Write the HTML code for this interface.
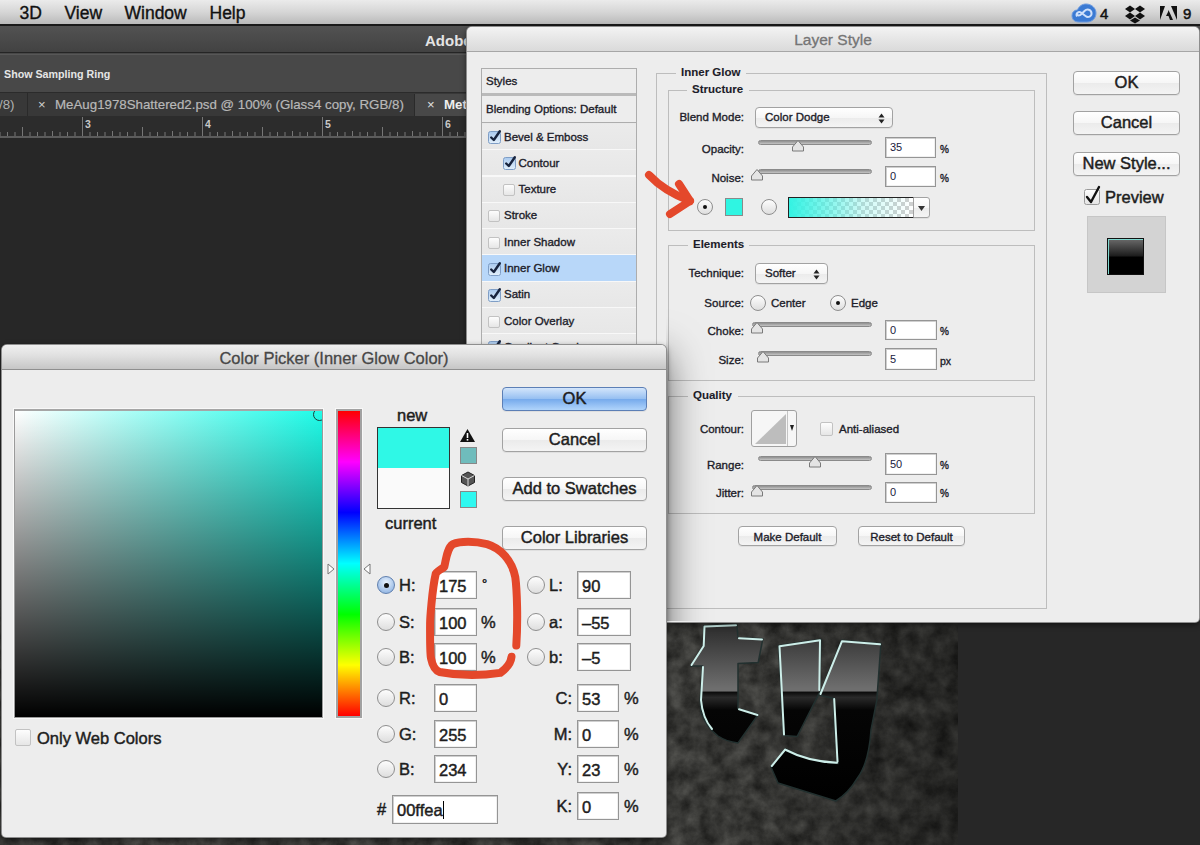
<!DOCTYPE html>
<html><head><meta charset="utf-8"><style>
*{margin:0;padding:0;box-sizing:border-box}
html,body{width:1200px;height:845px;overflow:hidden;background:#272727;font-family:"Liberation Sans",sans-serif;position:relative}
.a{position:absolute}
.t{position:absolute;white-space:nowrap;line-height:1}
.dlg{position:absolute;background:#ededed;border-radius:5px 5px 4px 4px;box-shadow:0 0 0 1px #8e8e8e, 0 2px 6px rgba(0,0,0,.6)}
.dtitle{position:absolute;left:0;top:0;right:0;height:25px;border-radius:5px 5px 0 0;background:linear-gradient(#f1f1f1,#e3e3e3 40%,#d2d2d2);border-bottom:1px solid #8f8f8f;text-align:center;color:#444;line-height:25px}
.lbl{position:absolute;white-space:nowrap;font-size:11.5px;color:#1d1d2a;line-height:1;-webkit-text-stroke:0.35px #1d1d2a}
.big{font-size:16.5px;-webkit-text-stroke:0.45px #1d1d1d;color:#1d1d1d}
.inp{position:absolute;background:#fff;border:1px solid #959595;box-shadow:inset 1px 1px 0 #cfcfcf,inset -1px -1px 0 #f0f0f0;font-size:11px;color:#1a1a40;padding-left:4px;white-space:nowrap}
.btn{position:absolute;border:1px solid #a2a2a2;border-radius:4px;background:linear-gradient(#ffffff,#f6f6f6 50%,#ebebeb 51%,#f4f4f4);text-align:center;color:#111;white-space:nowrap;box-shadow:0 1px 0 rgba(0,0,0,.06)}
.grp{position:absolute;border:1px solid #bdbdbd}
.chk{position:absolute;width:12px;height:12px;border:1px solid #c2c2c2;border-radius:2px;background:linear-gradient(#fdfdfd,#e6e6e6)}
.radio{position:absolute;border-radius:50%;border:1px solid #8e8e8e;background:linear-gradient(#fdfdfd,#e0e0e0)}
.track{position:absolute;height:5px;border-radius:3px;background:linear-gradient(#8f8f8f,#c4c4c4);border:1px solid #8a8a8a}
</style></head><body>
<div class="a" style="left:0;top:0;width:1200px;height:24px;background:linear-gradient(#ebebeb,#d6d6d6 50%,#bababa)"></div>
<div class="a" style="left:0;top:24px;width:1200px;height:2px;background:#1a1a1a"></div>
<div class="t" style="left:19.5px;top:5px;font-size:17.5px;color:#111;-webkit-text-stroke:0.35px #111">3D</div>
<div class="t" style="left:64.5px;top:5px;font-size:17.5px;color:#111;-webkit-text-stroke:0.35px #111">View</div>
<div class="t" style="left:124.5px;top:5px;font-size:17.5px;color:#111;-webkit-text-stroke:0.35px #111">Window</div>
<div class="t" style="left:209.5px;top:5px;font-size:17.5px;color:#111;-webkit-text-stroke:0.35px #111">Help</div>
<svg class="a" style="left:1068px;top:1px" width="132" height="23">
<g transform="translate(4,2)">
<path d="M7 19 C2 19 0 16 0 12.5 C0 9 2.5 7 5.5 7 C7 3 10.5 1 14 1 C19.5 1 24 5 24 10 C24 15.5 20 19 15 19 Z" fill="#3b7ad3" stroke="#6d9be0" stroke-width="1"/>
<path d="M5 13.5 C3.5 10.5 6.5 8 9 9.5 L13.5 13 C16 15 20 13.5 19.5 10 C19 6.5 15 5.5 12.5 8 L9.5 11 C7.5 13 5.5 13 5 11" fill="none" stroke="#cfe0fb" stroke-width="2"/>
</g>
<text x="32" y="18" font-size="15" font-family="Liberation Sans" fill="#111" stroke="#111" stroke-width="0.5">4</text>
<g transform="translate(57,4)" fill="#111">
<path d="M0 4 L5 0.5 L10 4 L5 7.5 Z"/><path d="M10 4 L15 0.5 L20 4 L15 7.5 Z"/>
<path d="M0 11 L5 7.5 L10 11 L5 14.5 Z"/><path d="M10 11 L15 7.5 L20 11 L15 14.5 Z"/>
<path d="M5 15.5 L10 12.5 L15 15.5 L10 18.5 Z"/>
</g>
<g transform="translate(92,5)" fill="#111">
<path d="M0 0 L5 0 L0 14 Z"/><path d="M11 0 L17 0 L17 14 Z"/><path d="M8.5 4 L13 14 L10 14 L8.5 10 L6 10 L8 6 Z"/>
</g>
<text x="115" y="18" font-size="15" font-family="Liberation Sans" fill="#111" stroke="#111" stroke-width="0.5">9</text>
</svg>
<div class="a" style="left:0;top:26px;width:1200px;height:26px;background:linear-gradient(#525252,#424242)"></div>
<div class="a" style="left:0;top:52px;width:1200px;height:1px;background:#252525"></div>
<div class="t" style="left:425px;top:33px;font-size:15px;font-weight:bold;color:#e4e4e4">Adobe</div>
<div class="a" style="left:0;top:53px;width:1200px;height:39px;background:#484848"></div>
<div class="a" style="left:0;top:92px;width:1200px;height:1px;background:#2b2b2b"></div>
<div class="a" style="left:0;top:54px;width:1200px;height:1px;background:#575757"></div>
<div class="t" style="left:4px;top:69px;font-size:10.7px;font-weight:bold;color:#e6e6e6">Show Sampling Ring</div>
<div class="a" style="left:0;top:93px;width:1200px;height:23px;background:#383838"></div>
<div class="a" style="left:27px;top:93px;width:1px;height:23px;background:#2a2a2a"></div>
<div class="a" style="left:414px;top:94px;width:800px;height:22px;background:#484848;border-left:1px solid #2a2a2a"></div>
<div class="t" style="left:-1px;top:98px;font-size:13.3px;color:#b0b0b0">/8)</div>
<div class="t" style="left:38px;top:98px;font-size:13px;color:#d0d0d0">×</div>
<div class="t" style="left:55px;top:98px;font-size:13.3px;color:#b8b8b8;-webkit-text-stroke:0.2px #b8b8b8">MeAug1978Shattered2.psd @ 100% (Glass4 copy, RGB/8)</div>
<div class="t" style="left:427px;top:98px;font-size:13px;color:#e0e0e0">×</div>
<div class="t" style="left:444px;top:98px;font-size:13.3px;font-weight:bold;color:#eee">Met</div>
<div class="a" style="left:0;top:116px;width:1200px;height:21px;background:#2c2c2c"></div>
<svg class="a" style="left:0;top:0" width="470" height="140"><rect x="0" y="136" width="470" height="2" fill="#5c5c5c"/><rect x="-0.5" y="132" width="1" height="4" fill="#767676"/><rect x="7.0" y="132" width="1" height="4" fill="#767676"/><rect x="14.5" y="132" width="1" height="4" fill="#767676"/><rect x="22.0" y="127" width="1" height="9" fill="#767676"/><rect x="29.5" y="132" width="1" height="4" fill="#767676"/><rect x="37.0" y="132" width="1" height="4" fill="#767676"/><rect x="44.5" y="132" width="1" height="4" fill="#767676"/><rect x="52.0" y="131" width="1" height="5" fill="#767676"/><rect x="59.5" y="132" width="1" height="4" fill="#767676"/><rect x="67.0" y="132" width="1" height="4" fill="#767676"/><rect x="74.5" y="132" width="1" height="4" fill="#767676"/><rect x="82.0" y="117" width="1" height="19" fill="#767676"/><rect x="89.5" y="132" width="1" height="4" fill="#767676"/><rect x="97.0" y="132" width="1" height="4" fill="#767676"/><rect x="104.5" y="132" width="1" height="4" fill="#767676"/><rect x="112.0" y="131" width="1" height="5" fill="#767676"/><rect x="119.5" y="132" width="1" height="4" fill="#767676"/><rect x="127.0" y="132" width="1" height="4" fill="#767676"/><rect x="134.5" y="132" width="1" height="4" fill="#767676"/><rect x="142.0" y="127" width="1" height="9" fill="#767676"/><rect x="149.5" y="132" width="1" height="4" fill="#767676"/><rect x="157.0" y="132" width="1" height="4" fill="#767676"/><rect x="164.5" y="132" width="1" height="4" fill="#767676"/><rect x="172.0" y="131" width="1" height="5" fill="#767676"/><rect x="179.5" y="132" width="1" height="4" fill="#767676"/><rect x="187.0" y="132" width="1" height="4" fill="#767676"/><rect x="194.5" y="132" width="1" height="4" fill="#767676"/><rect x="202.0" y="117" width="1" height="19" fill="#767676"/><rect x="209.5" y="132" width="1" height="4" fill="#767676"/><rect x="217.0" y="132" width="1" height="4" fill="#767676"/><rect x="224.5" y="132" width="1" height="4" fill="#767676"/><rect x="232.0" y="131" width="1" height="5" fill="#767676"/><rect x="239.5" y="132" width="1" height="4" fill="#767676"/><rect x="247.0" y="132" width="1" height="4" fill="#767676"/><rect x="254.5" y="132" width="1" height="4" fill="#767676"/><rect x="262.0" y="127" width="1" height="9" fill="#767676"/><rect x="269.5" y="132" width="1" height="4" fill="#767676"/><rect x="277.0" y="132" width="1" height="4" fill="#767676"/><rect x="284.5" y="132" width="1" height="4" fill="#767676"/><rect x="292.0" y="131" width="1" height="5" fill="#767676"/><rect x="299.5" y="132" width="1" height="4" fill="#767676"/><rect x="307.0" y="132" width="1" height="4" fill="#767676"/><rect x="314.5" y="132" width="1" height="4" fill="#767676"/><rect x="322.0" y="117" width="1" height="19" fill="#767676"/><rect x="329.5" y="132" width="1" height="4" fill="#767676"/><rect x="337.0" y="132" width="1" height="4" fill="#767676"/><rect x="344.5" y="132" width="1" height="4" fill="#767676"/><rect x="352.0" y="131" width="1" height="5" fill="#767676"/><rect x="359.5" y="132" width="1" height="4" fill="#767676"/><rect x="367.0" y="132" width="1" height="4" fill="#767676"/><rect x="374.5" y="132" width="1" height="4" fill="#767676"/><rect x="382.0" y="127" width="1" height="9" fill="#767676"/><rect x="389.5" y="132" width="1" height="4" fill="#767676"/><rect x="397.0" y="132" width="1" height="4" fill="#767676"/><rect x="404.5" y="132" width="1" height="4" fill="#767676"/><rect x="412.0" y="131" width="1" height="5" fill="#767676"/><rect x="419.5" y="132" width="1" height="4" fill="#767676"/><rect x="427.0" y="132" width="1" height="4" fill="#767676"/><rect x="434.5" y="132" width="1" height="4" fill="#767676"/><rect x="442.0" y="117" width="1" height="19" fill="#767676"/><rect x="449.5" y="132" width="1" height="4" fill="#767676"/><rect x="457.0" y="132" width="1" height="4" fill="#767676"/><rect x="464.5" y="132" width="1" height="4" fill="#767676"/><text x="85" y="128" font-size="10.5" font-weight="bold" fill="#c8c8c8" font-family="Liberation Sans">3</text><text x="205" y="128" font-size="10.5" font-weight="bold" fill="#c8c8c8" font-family="Liberation Sans">4</text><text x="325" y="128" font-size="10.5" font-weight="bold" fill="#c8c8c8" font-family="Liberation Sans">5</text><text x="445" y="128" font-size="10.5" font-weight="bold" fill="#c8c8c8" font-family="Liberation Sans">6</text></svg>
<svg class="a" style="left:0;top:600px" width="960" height="245">
<defs><filter id="stone" x="0" y="0" width="100%" height="100%" color-interpolation-filters="sRGB">
<feTurbulence type="fractalNoise" baseFrequency="0.06" numOctaves="6" seed="5" result="n"/>
<feColorMatrix in="n" type="matrix" values="0.28 0 0 0 0.075  0.28 0 0 0 0.075  0.27 0 0 0 0.07  0 0 0 0 1"/>
</filter></defs>
<rect x="0" y="0" width="958" height="245" fill="#4e4e49" filter="url(#stone)"/>
<defs><linearGradient id="shade" x1="0" y1="0" x2="1" y2="0"><stop offset="0.3" stop-color="#000" stop-opacity="0"/><stop offset="1" stop-color="#000" stop-opacity="0.35"/></linearGradient></defs>
<rect x="667" y="0" width="291" height="245" fill="url(#shade)" transform="translate(0,0)"/>
</svg>
<svg class="a" style="left:0;top:0" width="1200" height="845">
<defs>
<linearGradient id="lg" x1="0" y1="620" x2="0" y2="800" gradientUnits="userSpaceOnUse">
<stop offset="0" stop-color="#262626"/><stop offset="0.38" stop-color="#6e6e6e"/><stop offset="0.395" stop-color="#6e6e6e"/>
<stop offset="0.40" stop-color="#0a0a0a"/><stop offset="0.43" stop-color="#2a2a2a"/><stop offset="0.5" stop-color="#050505"/><stop offset="1" stop-color="#000"/>
</linearGradient>
</defs>
<g fill="url(#lg)" stroke="#22302f" stroke-width="1.5" stroke-linejoin="round">
<path d="M703.7,625.7 L736.9,624.5 L738,637.5 L762.9,638.7 L758.2,662.4 L738,663.5 L738,708.5 L758.2,714.5 L738,742.9 C730,742 724,740 718,736 C710,730 704,722 701,712 L700.2,700 L702.5,665.9 L690.7,665.9 L703.7,645.8 Z"/>
<polygon points="778.5,645.5 820.9,639.3 819.8,692.1 797.1,736.6 783.6,735.5"/>
<path d="M841.6,640.3 L880.9,643.5 L876.8,700.4 L871,730 C869.5,752 865,768 857.5,778 C851,789 844,796 835.8,801 L778,783 L770.8,766.8 L785.5,749 C800,757 820,762 838,763.6 L834.8,730 L833.3,698.3 L819.8,695.2 Z"/>
</g>
<g fill="none" stroke="#cdeee9" stroke-width="2" stroke-linecap="round" stroke-linejoin="round">
<path d="M691.5,665 L703.7,646 L704.5,626.5 L736,625.3"/>
<path d="M739,638.3 L762,639.5"/>
<path d="M703,667 L701,700 C702,712 706,722 712,729"/>
<path d="M739,709.3 L757.5,715"/>
<path d="M784,734.5 L779.5,646.3 L820,640.2 L819.3,690"/>
<path d="M820.5,694 L842,641.2 L880,644.3"/>
<path d="M834.2,699 L837.5,761.5"/>
<path d="M771.8,766 L785.2,749.5"/>
<path d="M786,750 C800,757.5 820,762 837,762.8"/>
</g>
</svg>
<div class="dlg" style="left:467px;top:27px;width:732px;height:595px"><div class="dtitle" style="font-size:15.5px;color:#757575;-webkit-text-stroke:0.3px #757575;background:linear-gradient(#f3f3f3,#e6e6e6 50%,#dadada);border-bottom-color:#a6a6a6">Layer Style</div></div>
<div class="a" style="left:481px;top:68px;width:156px;height:292px;background:#e9e9e9;border:1px solid #adadad"></div>
<div class="a" style="left:482px;top:69px;width:154px;height:24px;background:#ededed"></div>
<div class="a" style="left:482px;top:93px;width:154px;height:3px;background:#bababa"></div>
<div class="a" style="left:482px;top:96px;width:154px;height:27px;background:#ededed;border-bottom:1px solid #adadad"></div>
<div class="a" style="left:482px;top:124px;width:154px;height:236px;background:repeating-linear-gradient(#ebebeb 0,#e7e7e7 25px,#f8f8f8 25px,#f8f8f8 26.3px)"></div>
<div class="a" style="left:482px;top:255px;width:154px;height:26px;background:#b8d7f9"></div>
<div class="lbl" style="left:486px;top:75.5px">Styles</div>
<div class="lbl" style="left:486px;top:104px">Blending Options: Default</div>
<svg width="0" height="0" style="position:absolute"><defs><linearGradient id="cbg" x1="0" y1="0" x2="0" y2="1"><stop offset="0" stop-color="#a9c9ee"/><stop offset="1" stop-color="#e3f0fb"/></linearGradient></defs></svg>
<svg class="a" style="left:488.0px;top:128.0px" width="16" height="16" viewBox="0 0 16 16"><rect x="0.5" y="3.5" width="12" height="12" rx="2" fill="url(#cbg)" stroke="#7f9ec6"/><path d="M3.2 9.5 L5.8 12 L11.8 3.2" fill="none" stroke="#18243e" stroke-width="2.4" stroke-linecap="round" stroke-linejoin="round"/></svg>
<div class="lbl" style="left:504.0px;top:131.5px">Bevel &amp; Emboss</div>
<svg class="a" style="left:502.5px;top:154.3px" width="16" height="16" viewBox="0 0 16 16"><rect x="0.5" y="3.5" width="12" height="12" rx="2" fill="url(#cbg)" stroke="#7f9ec6"/><path d="M3.2 9.5 L5.8 12 L11.8 3.2" fill="none" stroke="#18243e" stroke-width="2.4" stroke-linecap="round" stroke-linejoin="round"/></svg>
<div class="lbl" style="left:518.5px;top:157.8px">Contour</div>
<div class="chk" style="left:502.5px;top:184.1px"></div>
<div class="lbl" style="left:518.5px;top:184.1px">Texture</div>
<div class="chk" style="left:488.0px;top:210.4px"></div>
<div class="lbl" style="left:504.0px;top:210.4px">Stroke</div>
<div class="chk" style="left:488.0px;top:236.7px"></div>
<div class="lbl" style="left:504.0px;top:236.7px">Inner Shadow</div>
<svg class="a" style="left:488.0px;top:259.5px" width="16" height="16" viewBox="0 0 16 16"><rect x="0.5" y="3.5" width="12" height="12" rx="2" fill="url(#cbg)" stroke="#7f9ec6"/><path d="M3.2 9.5 L5.8 12 L11.8 3.2" fill="none" stroke="#18243e" stroke-width="2.4" stroke-linecap="round" stroke-linejoin="round"/></svg>
<div class="lbl" style="left:504.0px;top:263.0px">Inner Glow</div>
<svg class="a" style="left:488.0px;top:285.8px" width="16" height="16" viewBox="0 0 16 16"><rect x="0.5" y="3.5" width="12" height="12" rx="2" fill="url(#cbg)" stroke="#7f9ec6"/><path d="M3.2 9.5 L5.8 12 L11.8 3.2" fill="none" stroke="#18243e" stroke-width="2.4" stroke-linecap="round" stroke-linejoin="round"/></svg>
<div class="lbl" style="left:504.0px;top:289.3px">Satin</div>
<div class="chk" style="left:488.0px;top:315.6px"></div>
<div class="lbl" style="left:504.0px;top:315.6px">Color Overlay</div>
<svg class="a" style="left:488.0px;top:338.4px" width="16" height="16" viewBox="0 0 16 16"><rect x="0.5" y="3.5" width="12" height="12" rx="2" fill="url(#cbg)" stroke="#7f9ec6"/><path d="M3.2 9.5 L5.8 12 L11.8 3.2" fill="none" stroke="#18243e" stroke-width="2.4" stroke-linecap="round" stroke-linejoin="round"/></svg>
<div class="lbl" style="left:504.0px;top:341.9px">Gradient Overlay</div>
<div class="grp" style="left:656px;top:73px;width:391px;height:536px"></div>
<div class="a" style="left:676px;top:66px;width:70px;height:14px;background:#ededed"></div>
<div class="lbl" style="left:681px;top:67px;font-weight:bold;-webkit-text-stroke:0.1px #1d1d2a">Inner Glow</div>
<div class="grp" style="left:668px;top:90px;width:367px;height:141px"></div>
<div class="a" style="left:687px;top:83px;width:62px;height:14px;background:#ededed"></div>
<div class="lbl" style="left:692px;top:84px;font-weight:bold;-webkit-text-stroke:0.1px #1d1d2a">Structure</div>
<div class="grp" style="left:668px;top:245px;width:367px;height:136px"></div>
<div class="a" style="left:688px;top:238px;width:61px;height:14px;background:#ededed"></div>
<div class="lbl" style="left:693px;top:239px;font-weight:bold;-webkit-text-stroke:0.1px #1d1d2a">Elements</div>
<div class="grp" style="left:668px;top:396px;width:367px;height:118px"></div>
<div class="a" style="left:688px;top:389px;width:50px;height:14px;background:#ededed"></div>
<div class="lbl" style="left:693px;top:390px;font-weight:bold;-webkit-text-stroke:0.1px #1d1d2a">Quality</div>
<div class="lbl " style="right:456px;top:111.5px;font-size:11.5px">Blend Mode:</div>
<div class="btn" style="left:755px;top:107px;width:138px;height:21px;font-size:11px;text-align:left;padding-left:9px;line-height:19px"><span class="lbl" style="position:static">Color Dodge</span><svg class="a" style="right:7px;top:5px" width="7" height="11"><path d="M0.5 4.5 L3.5 0.5 L6.5 4.5 Z M0.5 6.5 L3.5 10.5 L6.5 6.5 Z" fill="#222"/></svg></div>
<div class="lbl " style="right:456px;top:143.5px;font-size:11.5px">Opacity:</div>
<div class="track" style="left:758px;top:140px;width:114px"></div>
<svg class="a" style="left:791px;top:139px" width="14" height="13" viewBox="0 0 14 13"><path d="M1.5 12 L1.5 8 L7 1.5 L12.5 8 L12.5 12 Z" fill="#e4e4e4" stroke="#7a7a7a" stroke-width="1"/></svg>
<div class="inp " style="left:885px;top:137px;width:51px;height:21px;line-height:19px;font-size:11px">35</div>
<div class="lbl " style="left:940px;top:145.3px;font-size:10px">%</div>
<div class="lbl " style="right:456px;top:172.5px;font-size:11.5px">Noise:</div>
<div class="track" style="left:758px;top:169px;width:114px"></div>
<svg class="a" style="left:750px;top:168px" width="14" height="13" viewBox="0 0 14 13"><path d="M1.5 12 L1.5 8 L7 1.5 L12.5 8 L12.5 12 Z" fill="#e4e4e4" stroke="#7a7a7a" stroke-width="1"/></svg>
<div class="inp " style="left:885px;top:166px;width:51px;height:21px;line-height:19px;font-size:11px">0</div>
<div class="lbl " style="left:940px;top:174.3px;font-size:10px">%</div>
<div class="radio" style="left:697px;top:199px;width:16px;height:16px;background:linear-gradient(#fdfdfd,#dedede);border-color:#8e8e8e"></div>
<div class="a" style="left:703.0px;top:205.0px;width:4px;height:4px;border-radius:50%;background:#111"></div>
<div class="a" style="left:725px;top:198px;width:18px;height:18px;background:#2ff5e2;border:1px solid #8a8a8a"></div>
<div class="radio" style="left:761px;top:199px;width:16px;height:16px;background:linear-gradient(#fdfdfd,#dedede);border-color:#8e8e8e"></div>
<div class="a" style="left:788px;top:197px;width:126px;height:21px;border:1px solid #222;background:linear-gradient(90deg,#33f3e3,rgba(120,240,230,0.35) 60%,rgba(255,255,255,0)),repeating-conic-gradient(#cfcfcf 0 25%,#fff 0 50%) 0 0/8px 8px"></div>
<div class="btn" style="left:913px;top:197px;width:17px;height:21px;border-radius:0 3px 3px 0"><svg class="a" style="left:4px;top:8px" width="7" height="5"><path d="M0 0 L7 0 L3.5 5 Z" fill="#333"/></svg></div>
<div class="lbl " style="right:456px;top:267.5px;font-size:11.5px">Technique:</div>
<div class="btn" style="left:755px;top:263px;width:73px;height:21px;font-size:11px;text-align:left;padding-left:9px;line-height:19px"><span class="lbl" style="position:static">Softer</span><svg class="a" style="right:7px;top:5px" width="7" height="11"><path d="M0.5 4.5 L3.5 0.5 L6.5 4.5 Z M0.5 6.5 L3.5 10.5 L6.5 6.5 Z" fill="#222"/></svg></div>
<div class="lbl " style="right:456px;top:297.5px;font-size:11.5px">Source:</div>
<div class="radio" style="left:750px;top:295px;width:16px;height:16px;background:linear-gradient(#fdfdfd,#dedede);border-color:#8e8e8e"></div>
<div class="lbl " style="left:771px;top:297.5px;font-size:11.5px">Center</div>
<div class="radio" style="left:830px;top:295px;width:16px;height:16px;background:linear-gradient(#fdfdfd,#dedede);border-color:#8e8e8e"></div>
<div class="a" style="left:836.0px;top:301.0px;width:4px;height:4px;border-radius:50%;background:#111"></div>
<div class="lbl " style="left:851px;top:297.5px;font-size:11.5px">Edge</div>
<div class="lbl " style="right:456px;top:325.5px;font-size:11.5px">Choke:</div>
<div class="track" style="left:752px;top:322px;width:120px"></div>
<svg class="a" style="left:750px;top:321px" width="14" height="13" viewBox="0 0 14 13"><path d="M1.5 12 L1.5 8 L7 1.5 L12.5 8 L12.5 12 Z" fill="#e4e4e4" stroke="#7a7a7a" stroke-width="1"/></svg>
<div class="inp " style="left:885px;top:320px;width:52px;height:20px;line-height:18px;font-size:11px">0</div>
<div class="lbl " style="left:940px;top:327.3px;font-size:10px">%</div>
<div class="lbl " style="right:456px;top:354.5px;font-size:11.5px">Size:</div>
<div class="track" style="left:758px;top:351px;width:114px"></div>
<svg class="a" style="left:756px;top:350px" width="14" height="13" viewBox="0 0 14 13"><path d="M1.5 12 L1.5 8 L7 1.5 L12.5 8 L12.5 12 Z" fill="#e4e4e4" stroke="#7a7a7a" stroke-width="1"/></svg>
<div class="inp " style="left:885px;top:348px;width:52px;height:22px;line-height:20px;font-size:11px">5</div>
<div class="lbl " style="left:940px;top:356.0px;font-size:10.5px">px</div>
<div class="lbl " style="right:456px;top:423.5px;font-size:11.5px">Contour:</div>
<div class="a" style="left:751px;top:410px;width:46px;height:37px;border:1px solid #a0a0a0;border-radius:3px;background:#f6f6f6"></div>
<svg class="a" style="left:752px;top:411px" width="44" height="35"><polygon points="3,33 34,33 34,3" fill="#bdbdbd"/><line x1="35.5" y1="0" x2="35.5" y2="35" stroke="#c4c4c4"/><polygon points="38,14 42,14 40,20" fill="#222"/></svg>
<div class="chk" style="left:820px;top:422px;width:13px;height:14px"></div>
<div class="lbl " style="left:839px;top:423.5px;font-size:11.5px">Anti-aliased</div>
<div class="lbl " style="right:456px;top:459.5px;font-size:11.5px">Range:</div>
<div class="track" style="left:758px;top:456px;width:114px"></div>
<svg class="a" style="left:808px;top:455px" width="14" height="13" viewBox="0 0 14 13"><path d="M1.5 12 L1.5 8 L7 1.5 L12.5 8 L12.5 12 Z" fill="#e4e4e4" stroke="#7a7a7a" stroke-width="1"/></svg>
<div class="inp " style="left:885px;top:453px;width:52px;height:22px;line-height:20px;font-size:11px">50</div>
<div class="lbl " style="left:940px;top:461.3px;font-size:10px">%</div>
<div class="lbl " style="right:456px;top:487.5px;font-size:11.5px">Jitter:</div>
<div class="track" style="left:752px;top:485px;width:120px"></div>
<svg class="a" style="left:750px;top:484px" width="14" height="13" viewBox="0 0 14 13"><path d="M1.5 12 L1.5 8 L7 1.5 L12.5 8 L12.5 12 Z" fill="#e4e4e4" stroke="#7a7a7a" stroke-width="1"/></svg>
<div class="inp " style="left:885px;top:482px;width:52px;height:21px;line-height:19px;font-size:11px">0</div>
<div class="lbl " style="left:940px;top:489.3px;font-size:10px">%</div>
<div class="btn" style="left:738px;top:526px;width:99px;height:20px;line-height:18px"><span class="lbl" style="position:static">Make Default</span></div>
<div class="btn" style="left:858px;top:526px;width:107px;height:20px;line-height:18px"><span class="lbl" style="position:static">Reset to Default</span></div>
<div class="btn" style="left:1073px;top:71px;width:107px;height:24px;line-height:22px"><span class="lbl big" style="position:static">OK</span></div>
<div class="btn" style="left:1073px;top:111px;width:107px;height:24px;line-height:22px"><span class="lbl big" style="position:static">Cancel</span></div>
<div class="btn" style="left:1073px;top:152px;width:107px;height:24px;line-height:22px"><span class="lbl big" style="position:static">New Style...</span></div>
<svg class="a" style="left:1083px;top:185px" width="20" height="22" viewBox="0 0 20 22"><rect x="1.5" y="4.5" width="15" height="15" rx="2" fill="url(#cbg2)" stroke="#9a9a9a"/><path d="M4 12 L8 17 L16 2" fill="none" stroke="#111" stroke-width="2.4" stroke-linecap="round" stroke-linejoin="round"/><defs><linearGradient id="cbg2" x1="0" y1="0" x2="0" y2="1"><stop offset="0" stop-color="#fdfdfd"/><stop offset="1" stop-color="#e4e4e4"/></linearGradient></defs></svg>
<div class="lbl big" style="left:1105px;top:188.7px;font-size:16.5px">Preview</div>
<div class="a" style="left:1087px;top:216px;width:79px;height:77px;background:#d3d3d3;border:1px solid #c6c6c6"></div>
<div class="a" style="left:1107px;top:238px;width:37px;height:37px;background:linear-gradient(#6a6a6a,#1d1d1d 48%,#000 52%,#000);border:1px solid #111;box-shadow:inset 1px 1px 0 #7fd8cf"></div>
<div class="a" style="left:666px;top:300px;width:120px;height:321px;overflow:hidden"><div class="a" style="left:-664px;top:45px;width:664px;height:492px;border-radius:5px;box-shadow:0 10px 40px rgba(0,0,0,0.62)"></div></div>
<div class="dlg" style="left:2px;top:345px;width:664px;height:492px"><div class="dtitle" style="font-size:16.5px;-webkit-text-stroke:0.3px #474747;color:#474747;line-height:27px;background:linear-gradient(#f0f0f0,#e0e0e0 45%,#c6c6c6)">Color Picker (Inner Glow Color)</div></div>
<div class="a" style="left:14px;top:409px;width:309px;height:309px;border:1px solid #9a9a9a;border-top:2px solid #a6a6a6;background:linear-gradient(to bottom,rgba(0,0,0,0),#000),linear-gradient(to right,#fff,#1ffbe8);overflow:hidden;box-shadow:0 0 0 1px #f8f8f8"><div class="a" style="right:-4px;top:-3px;width:13px;height:13px;border-radius:50%;border:1.6px solid #1d3a38"></div></div>
<div class="a" style="left:336px;top:409px;width:26px;height:309px;border:2px solid #a2a2a2;box-shadow:0 0 0 1px #f8f8f8;background:linear-gradient(#ff0000,#ff00ff 16.7%,#0000ff 33.3%,#00ffff 50%,#00ff00 66.7%,#ffff00 83.3%,#ff0000)"></div>
<svg class="a" style="left:326px;top:562px" width="46" height="14"><path d="M2 2 L8 7 L2 12 Z" fill="#fff" stroke="#777"/><path d="M44 2 L38 7 L44 12 Z" fill="#fff" stroke="#777"/></svg>
<div class="lbl big" style="left:397px;top:406.7px;font-size:16.5px">new</div>
<div class="a" style="left:377px;top:427px;width:73px;height:82px;border:1px solid #333;background:linear-gradient(#2ff8e6 0,#2ff8e6 50%,#fafafa 50%)"></div>
<div class="lbl big" style="left:385px;top:514.7px;font-size:16.5px">current</div>
<svg class="a" style="left:459px;top:428px" width="18" height="16"><path d="M8.5 1 L16 14 L1 14 Z" fill="#111"/><rect x="7.7" y="5" width="1.6" height="5" fill="#fff"/><rect x="7.7" y="11" width="1.6" height="1.6" fill="#fff"/></svg>
<div class="a" style="left:460px;top:447px;width:17px;height:17px;border:1px solid #888;background:#6fbcbc"></div>
<svg class="a" style="left:460px;top:471px" width="16" height="16"><path d="M8 1 L14.5 4.5 L14.5 11.5 L8 15 L1.5 11.5 L1.5 4.5 Z" fill="#555" stroke="#222"/><path d="M1.5 4.5 L8 8 L14.5 4.5 M8 8 L8 15" stroke="#ddd" fill="none"/></svg>
<div class="a" style="left:460px;top:491px;width:17px;height:17px;border:1px solid #888;background:#2ff8f0"></div>
<div class="btn" style="left:502px;top:387px;width:145px;height:24px;line-height:22px;border-color:#5c7fb6;background:linear-gradient(#d3e5fb,#95bff1 50%,#76aaec 51%,#b0d4fb)"><span class="lbl big" style="position:static">OK</span></div>
<div class="btn" style="left:502px;top:428px;width:145px;height:24px;line-height:22px"><span class="lbl big" style="position:static">Cancel</span></div>
<div class="btn" style="left:502px;top:477px;width:145px;height:24px;line-height:22px"><span class="lbl big" style="position:static">Add to Swatches</span></div>
<div class="btn" style="left:502px;top:526px;width:145px;height:24px;line-height:22px"><span class="lbl big" style="position:static">Color Libraries</span></div>
<div class="radio" style="left:377px;top:576px;width:18px;height:18px;background:radial-gradient(circle at 50% 35%,#eaf4ff,#7fa8dd);border-color:#5f7fae"></div>
<div class="a" style="left:383.5px;top:582.5px;width:5px;height:5px;border-radius:50%;background:#111"></div>
<div class="lbl big" style="left:399px;top:576.7px;font-size:16.5px">H:</div>
<div class="inp " style="left:434px;top:571px;width:43px;height:28px;line-height:28px;font-size:16.5px"><span class="lbl big" style="position:static">175</span></div>
<div class="lbl big" style="left:482px;top:576.6px;font-size:13px">°</div>
<div class="radio" style="left:377px;top:613px;width:18px;height:18px;background:linear-gradient(#fdfdfd,#dedede);border-color:#8e8e8e"></div>
<div class="lbl big" style="left:399px;top:613.7px;font-size:16.5px">S:</div>
<div class="inp " style="left:434px;top:608px;width:43px;height:28px;line-height:28px;font-size:16.5px"><span class="lbl big" style="position:static">100</span></div>
<div class="lbl big" style="left:481px;top:613.7px;font-size:16.5px">%</div>
<div class="radio" style="left:377px;top:648px;width:18px;height:18px;background:linear-gradient(#fdfdfd,#dedede);border-color:#8e8e8e"></div>
<div class="lbl big" style="left:399px;top:648.7px;font-size:16.5px">B:</div>
<div class="inp " style="left:434px;top:643px;width:43px;height:28px;line-height:28px;font-size:16.5px"><span class="lbl big" style="position:static">100</span></div>
<div class="lbl big" style="left:481px;top:648.7px;font-size:16.5px">%</div>
<div class="radio" style="left:377px;top:689px;width:18px;height:18px;background:linear-gradient(#fdfdfd,#dedede);border-color:#8e8e8e"></div>
<div class="lbl big" style="left:399px;top:689.7px;font-size:16.5px">R:</div>
<div class="inp " style="left:434px;top:684px;width:43px;height:28px;line-height:28px;font-size:16.5px"><span class="lbl big" style="position:static">0</span></div>
<div class="radio" style="left:377px;top:725px;width:18px;height:18px;background:linear-gradient(#fdfdfd,#dedede);border-color:#8e8e8e"></div>
<div class="lbl big" style="left:399px;top:725.7px;font-size:16.5px">G:</div>
<div class="inp " style="left:434px;top:720px;width:43px;height:28px;line-height:28px;font-size:16.5px"><span class="lbl big" style="position:static">255</span></div>
<div class="radio" style="left:377px;top:760px;width:18px;height:18px;background:linear-gradient(#fdfdfd,#dedede);border-color:#8e8e8e"></div>
<div class="lbl big" style="left:399px;top:760.7px;font-size:16.5px">B:</div>
<div class="inp " style="left:434px;top:755px;width:43px;height:28px;line-height:28px;font-size:16.5px"><span class="lbl big" style="position:static">234</span></div>
<div class="radio" style="left:527px;top:576px;width:18px;height:18px;background:linear-gradient(#fdfdfd,#dedede);border-color:#8e8e8e"></div>
<div class="lbl big" style="left:549px;top:576.7px;font-size:16.5px">L:</div>
<div class="inp " style="left:577px;top:571px;width:54px;height:28px;line-height:28px;font-size:16.5px"><span class="lbl big" style="position:static">90</span></div>
<div class="radio" style="left:527px;top:613px;width:18px;height:18px;background:linear-gradient(#fdfdfd,#dedede);border-color:#8e8e8e"></div>
<div class="lbl big" style="left:549px;top:613.7px;font-size:16.5px">a:</div>
<div class="inp " style="left:577px;top:608px;width:54px;height:28px;line-height:28px;font-size:16.5px"><span class="lbl big" style="position:static">&#8211;55</span></div>
<div class="radio" style="left:527px;top:648px;width:18px;height:18px;background:linear-gradient(#fdfdfd,#dedede);border-color:#8e8e8e"></div>
<div class="lbl big" style="left:549px;top:648.7px;font-size:16.5px">b:</div>
<div class="inp " style="left:577px;top:643px;width:54px;height:28px;line-height:28px;font-size:16.5px"><span class="lbl big" style="position:static">&#8211;5</span></div>
<div class="lbl big" style="right:628px;top:689.7px;font-size:16.5px">C:</div>
<div class="inp " style="left:577px;top:684px;width:42px;height:28px;line-height:28px;font-size:16.5px"><span class="lbl big" style="position:static">53</span></div>
<div class="lbl big" style="left:624px;top:689.7px;font-size:16.5px">%</div>
<div class="lbl big" style="right:628px;top:725.7px;font-size:16.5px">M:</div>
<div class="inp " style="left:577px;top:720px;width:42px;height:28px;line-height:28px;font-size:16.5px"><span class="lbl big" style="position:static">0</span></div>
<div class="lbl big" style="left:624px;top:725.7px;font-size:16.5px">%</div>
<div class="lbl big" style="right:628px;top:760.7px;font-size:16.5px">Y:</div>
<div class="inp " style="left:577px;top:755px;width:42px;height:28px;line-height:28px;font-size:16.5px"><span class="lbl big" style="position:static">23</span></div>
<div class="lbl big" style="left:624px;top:760.7px;font-size:16.5px">%</div>
<div class="lbl big" style="right:628px;top:797.7px;font-size:16.5px">K:</div>
<div class="inp " style="left:577px;top:792px;width:42px;height:28px;line-height:28px;font-size:16.5px"><span class="lbl big" style="position:static">0</span></div>
<div class="lbl big" style="left:624px;top:797.7px;font-size:16.5px">%</div>
<div class="lbl big" style="left:377px;top:800.7px;font-size:16.5px">#</div>
<div class="inp " style="left:392px;top:795px;width:106px;height:29px;line-height:29px;font-size:16.5px"><span class="lbl big" style="position:static">00ffea</span><span style="display:inline-block;width:1px;height:18px;background:#000;vertical-align:-3px"></span></div>
<div class="chk" style="left:15px;top:729px;width:16px;height:17px"></div>
<div class="lbl big" style="left:37px;top:729.7px;font-size:16.5px">Only Web Colors</div>
<svg class="a" style="left:0;top:0" width="1200" height="845">
<g fill="none" stroke="#e4482b" stroke-width="8" stroke-linecap="round" stroke-linejoin="round">
<path d="M649,175 Q664,191 690,201"/>
<path d="M679,184 L690,201 L670,214"/>
<path d="M516.3,645.5 C518,620 517,590 515.3,577.3 C512,560 500,548 487,544.2 C475,541 460,541 452.9,544.2 C447,548 446,560 444.3,566.9 C440,570 436,572 435.8,573.5 C432,590 430,620 430.1,624.6 C430,640 430,655 431.1,658.7 C433,668 437,671 439.6,672 C460,676 480,676 500.2,672.9 C507,668 511,662 511.5,656.8"/>
</g>
</svg>
</body></html>
